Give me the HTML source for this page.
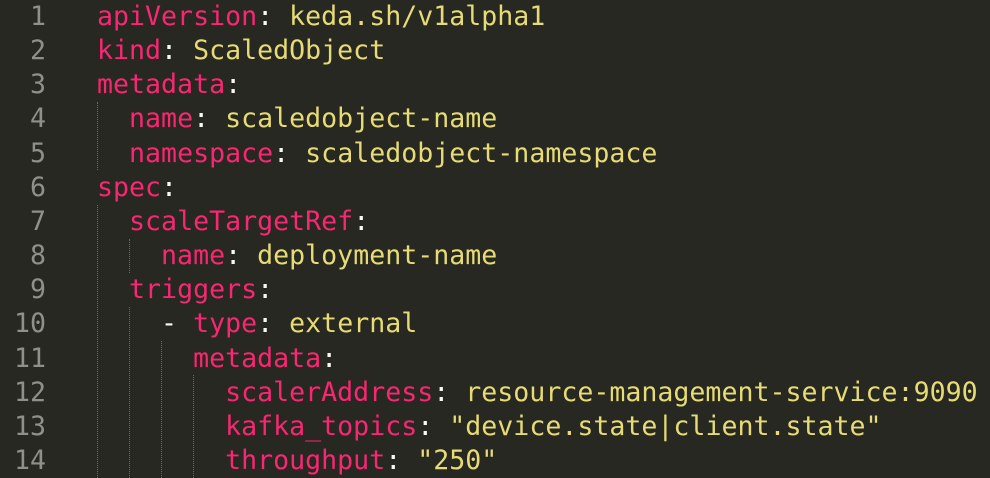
<!DOCTYPE html>
<html><head><meta charset="utf-8"><style>
html,body{margin:0;padding:0;background:#272822;width:990px;height:478px;overflow:hidden}
.w{position:relative;width:990px;height:478px;overflow:hidden;font-family:"DejaVu Sans Mono","Liberation Mono",monospace;font-size:26.6px;line-height:34.15px;color:#F8F8F2}
.l{position:absolute;left:0;width:990px;height:34.15px;white-space:pre}
.n{position:absolute;left:0;width:46px;color:#90908A;text-align:right}
.c{position:absolute;left:97px}
.k{color:#F92672}.s{color:#E6DB74}
.g{position:absolute;width:0;border-left:1px dotted #6a6a62}
</style></head><body><div class="w">
<div class="g" style="left:97px;top:102px;height:68px"></div>
<div class="g" style="left:97px;top:205px;height:273px"></div>
<div class="g" style="left:129px;top:239px;height:34px"></div>
<div class="g" style="left:129px;top:307px;height:171px"></div>
<div class="g" style="left:161px;top:341px;height:137px"></div>
<div class="g" style="left:193px;top:375px;height:103px"></div>
<div class="l" style="top:0px"><span class="n">1</span><span class="c"><span class="k">apiVersion</span>: <span class="s">keda.sh/v1alpha1</span></span></div>
<div class="l" style="top:34.15px"><span class="n">2</span><span class="c"><span class="k">kind</span>: <span class="s">ScaledObject</span></span></div>
<div class="l" style="top:68.3px"><span class="n">3</span><span class="c"><span class="k">metadata</span>:</span></div>
<div class="l" style="top:102.45px"><span class="n">4</span><span class="c">  <span class="k">name</span>: <span class="s">scaledobject-name</span></span></div>
<div class="l" style="top:136.6px"><span class="n">5</span><span class="c">  <span class="k">namespace</span>: <span class="s">scaledobject-namespace</span></span></div>
<div class="l" style="top:170.75px"><span class="n">6</span><span class="c"><span class="k">spec</span>:</span></div>
<div class="l" style="top:204.9px"><span class="n">7</span><span class="c">  <span class="k">scaleTargetRef</span>:</span></div>
<div class="l" style="top:239.05px"><span class="n">8</span><span class="c">    <span class="k">name</span>: <span class="s">deployment-name</span></span></div>
<div class="l" style="top:273.2px"><span class="n">9</span><span class="c">  <span class="k">triggers</span>:</span></div>
<div class="l" style="top:307.35px"><span class="n">10</span><span class="c">    - <span class="k">type</span>: <span class="s">external</span></span></div>
<div class="l" style="top:341.5px"><span class="n">11</span><span class="c">      <span class="k">metadata</span>:</span></div>
<div class="l" style="top:375.65px"><span class="n">12</span><span class="c">        <span class="k">scalerAddress</span>: <span class="s">resource-management-service:9090</span></span></div>
<div class="l" style="top:409.8px"><span class="n">13</span><span class="c">        <span class="k">kafka_topics</span>: <span class="s">"device.state|client.state"</span></span></div>
<div class="l" style="top:443.95px"><span class="n">14</span><span class="c">        <span class="k">throughput</span>: <span class="s">"250"</span></span></div>
</div></body></html>
